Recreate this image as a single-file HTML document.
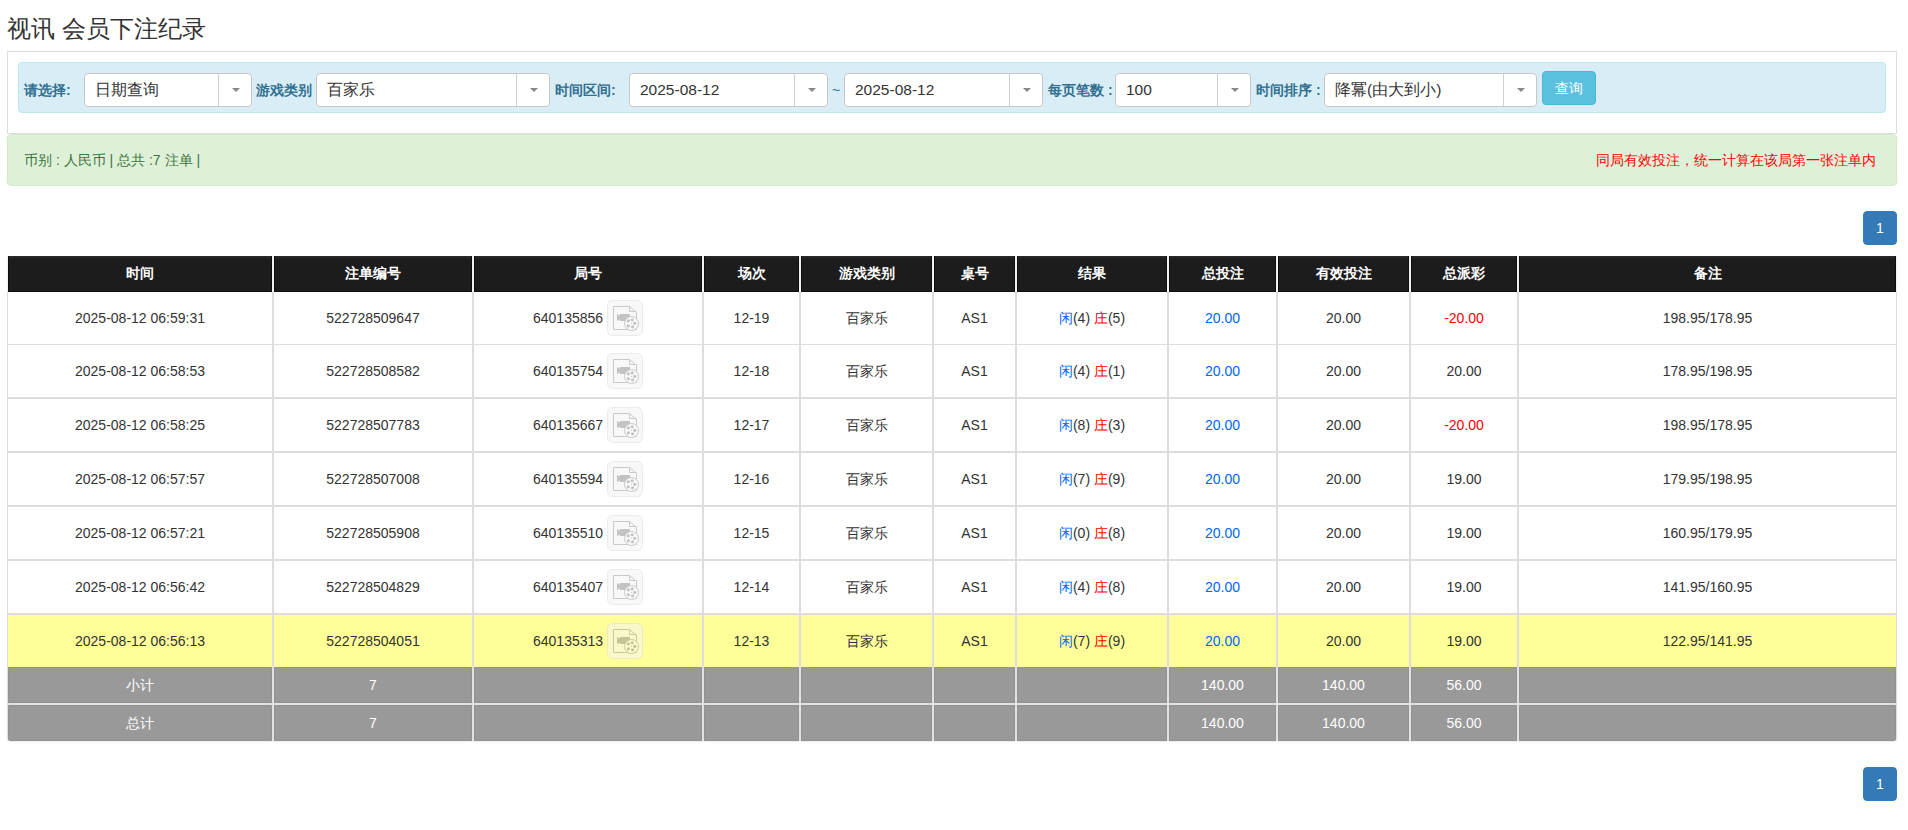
<!DOCTYPE html>
<html><head><meta charset="utf-8"><title>视讯 会员下注纪录</title>
<style>
*{box-sizing:border-box;margin:0;padding:0}
html,body{width:1908px;height:830px;overflow:hidden;background:#fff}
body{position:relative;font-family:"Liberation Sans",sans-serif;font-size:14px;color:#333}
.a{position:absolute}
.title{left:7px;top:13px;font-size:24px;line-height:32px;color:#333;white-space:nowrap}
.panel{left:7px;top:51px;width:1890px;height:83px;border:1px solid #ddd;background:#fff}
.info{left:18px;top:62px;width:1868px;height:51px;border:1px solid #bce8f1;background:#d9edf7;border-radius:4px}
.lbl{top:73px;height:34px;line-height:34px;font-weight:bold;color:#31708f;white-space:nowrap}
.sel{top:73px;height:34px;border:1px solid #c8c8c8;border-radius:4px;background:#fff}
.sel .t{position:absolute;left:10px;top:0;line-height:32px;font-size:15.5px;color:#333;white-space:nowrap}
.sel .d{position:absolute;top:0;bottom:0;right:32px;width:1px;background:#d0d0d0}
.sel .ar{position:absolute;top:14px;right:11px;width:0;height:0;border-left:4px solid transparent;border-right:4px solid transparent;border-top:4px solid #888}
.btn{left:1542px;top:71px;width:54px;height:34px;border:1px solid #46b8da;background:#5bc0de;border-radius:4px;color:#fff;text-align:center;line-height:32px}
.ok{left:7px;top:134px;width:1890px;height:52px;border:1px solid #d6e9c6;background:#dff0d8;border-radius:4px;color:#3c763d;line-height:50px}
.ok .l{position:absolute;left:16px;top:0;white-space:nowrap}
.ok .r{position:absolute;right:20px;top:0;white-space:nowrap;color:#f00}
.pg{left:1863px;width:34px;height:34px;background:#337ab7;border:1px solid #337ab7;border-radius:4px;color:#fff;text-align:center;line-height:32px}
.c{position:absolute;text-align:center;white-space:nowrap}
.h{background:linear-gradient(#2c2c2c 0,#222 2px,#1c1c1c 4px);color:#fff;font-weight:bold;border:1px solid #0e0e0e;border-top:0}
.b{background:#fff}
.y{background:#ffff99}
.g{background:#999;color:#fff;border:1px solid #929292}
.blue{color:#06f}
.red{color:#f00}
.vi{vertical-align:middle;position:relative;top:-1px;opacity:.55}
</style></head><body>

<div class="a title">视讯 会员下注纪录</div>
<div class="a panel"></div>
<div class="a info"></div>
<div class="a lbl" style="left:24px">请选择:</div>
<div class="a lbl" style="left:256px">游戏类别</div>
<div class="a lbl" style="left:555px">时间区间:</div>
<div class="a lbl" style="left:1048px">每页笔数 :</div>
<div class="a lbl" style="left:1256px">时间排序 :</div>
<div class="a lbl" style="left:832px;font-weight:normal">~</div>
<div class="a sel" style="left:84px;width:168px"><span class="t">日期查询</span><span class="d"></span><span class="ar"></span></div>
<div class="a sel" style="left:316px;width:234px"><span class="t">百家乐</span><span class="d"></span><span class="ar"></span></div>
<div class="a sel" style="left:629px;width:199px"><span class="t">2025-08-12</span><span class="d"></span><span class="ar"></span></div>
<div class="a sel" style="left:844px;width:199px"><span class="t">2025-08-12</span><span class="d"></span><span class="ar"></span></div>
<div class="a sel" style="left:1115px;width:136px"><span class="t">100</span><span class="d"></span><span class="ar"></span></div>
<div class="a sel" style="left:1324px;width:213px"><span class="t">降冪(由大到小)</span><span class="d"></span><span class="ar"></span></div>
<div class="a btn">查询</div>
<div class="a ok"><span class="l">币别 : 人民币 | 总共 :7 注单 |</span><span class="r">同局有效投注，统一计算在该局第一张注单内</span></div>
<div class="a pg" style="top:211px">1</div>
<div class="a pg" style="top:767px">1</div>
<div class="a" style="left:7px;top:256px;width:1890px;height:36px;background:#f2f2f2"></div>
<div class="a" style="left:7px;top:292px;width:1890px;height:375px;background:#ddd"></div>
<div class="a" style="left:7px;top:667px;width:1890px;height:74px;background:#e2e2e2;border-radius:0 0 3px 3px;box-shadow:0 1px 2px rgba(0,0,0,.08)"></div>
<div class="c h" style="left:8px;top:256px;width:264px;height:36px;line-height:36px;line-height:34px">时间</div>
<div class="c h" style="left:274px;top:256px;width:198px;height:36px;line-height:36px;line-height:34px">注单编号</div>
<div class="c h" style="left:474px;top:256px;width:228px;height:36px;line-height:36px;line-height:34px">局号</div>
<div class="c h" style="left:704px;top:256px;width:95px;height:36px;line-height:36px;line-height:34px">场次</div>
<div class="c h" style="left:801px;top:256px;width:131px;height:36px;line-height:36px;line-height:34px">游戏类别</div>
<div class="c h" style="left:934px;top:256px;width:81px;height:36px;line-height:36px;line-height:34px">桌号</div>
<div class="c h" style="left:1017px;top:256px;width:150px;height:36px;line-height:36px;line-height:34px">结果</div>
<div class="c h" style="left:1169px;top:256px;width:107px;height:36px;line-height:36px;line-height:34px">总投注</div>
<div class="c h" style="left:1278px;top:256px;width:131px;height:36px;line-height:36px;line-height:34px">有效投注</div>
<div class="c h" style="left:1411px;top:256px;width:106px;height:36px;line-height:36px;line-height:34px">总派彩</div>
<div class="c h" style="left:1519px;top:256px;width:377px;height:36px;line-height:36px;line-height:34px">备注</div>
<div class="c b" style="left:8px;top:292px;width:264px;height:52px;line-height:52px;">2025-08-12 06:59:31</div>
<div class="c b" style="left:274px;top:292px;width:198px;height:52px;line-height:52px;">522728509647</div>
<div class="c b" style="left:474px;top:292px;width:228px;height:52px;line-height:52px;">640135856 <svg class="vi" width="36" height="36" viewBox="0 0 36 36"><rect x="0.5" y="0.5" width="35" height="35" rx="5" ry="5" fill="#f3f3f3" stroke="#dcdcdc"/><path d="M6.5 6.5H22.5L29.5 12.5V29.5H6.5Z" fill="none" stroke="#9d9d9d"/><path d="M22.5 6.5V11.5H29.5" fill="none" stroke="#9d9d9d"/><path d="M13 14H23V21H13V19.5L10 21V14L13 15.5Z" fill="#939393"/><circle cx="24.5" cy="23.5" r="7" fill="#f6f6f6" stroke="#9d9d9d"/><circle cx="21.3" cy="20.8" r="1.6" fill="#939393"/><circle cx="25.2" cy="19.8" r="1.6" fill="#939393"/><circle cx="27.8" cy="23.3" r="1.6" fill="#939393"/><circle cx="25.5" cy="26.8" r="1.6" fill="#939393"/><circle cx="21.3" cy="25.8" r="1.6" fill="#939393"/><circle cx="24.5" cy="23.3" r="0.6" fill="#939393"/></svg></div>
<div class="c b" style="left:704px;top:292px;width:95px;height:52px;line-height:52px;">12-19</div>
<div class="c b" style="left:801px;top:292px;width:131px;height:52px;line-height:52px;">百家乐</div>
<div class="c b" style="left:934px;top:292px;width:81px;height:52px;line-height:52px;">AS1</div>
<div class="c b" style="left:1017px;top:292px;width:150px;height:52px;line-height:52px;"><span class="blue">闲</span>(4) <span class="red">庄</span>(5)</div>
<div class="c b" style="left:1169px;top:292px;width:107px;height:52px;line-height:52px;"><span class="blue">20.00</span></div>
<div class="c b" style="left:1278px;top:292px;width:131px;height:52px;line-height:52px;">20.00</div>
<div class="c b" style="left:1411px;top:292px;width:106px;height:52px;line-height:52px;"><span class="red">-20.00</span></div>
<div class="c b" style="left:1519px;top:292px;width:377px;height:52px;line-height:52px;">198.95/178.95</div>
<div class="c b" style="left:8px;top:345px;width:264px;height:52px;line-height:52px;">2025-08-12 06:58:53</div>
<div class="c b" style="left:274px;top:345px;width:198px;height:52px;line-height:52px;">522728508582</div>
<div class="c b" style="left:474px;top:345px;width:228px;height:52px;line-height:52px;">640135754 <svg class="vi" width="36" height="36" viewBox="0 0 36 36"><rect x="0.5" y="0.5" width="35" height="35" rx="5" ry="5" fill="#f3f3f3" stroke="#dcdcdc"/><path d="M6.5 6.5H22.5L29.5 12.5V29.5H6.5Z" fill="none" stroke="#9d9d9d"/><path d="M22.5 6.5V11.5H29.5" fill="none" stroke="#9d9d9d"/><path d="M13 14H23V21H13V19.5L10 21V14L13 15.5Z" fill="#939393"/><circle cx="24.5" cy="23.5" r="7" fill="#f6f6f6" stroke="#9d9d9d"/><circle cx="21.3" cy="20.8" r="1.6" fill="#939393"/><circle cx="25.2" cy="19.8" r="1.6" fill="#939393"/><circle cx="27.8" cy="23.3" r="1.6" fill="#939393"/><circle cx="25.5" cy="26.8" r="1.6" fill="#939393"/><circle cx="21.3" cy="25.8" r="1.6" fill="#939393"/><circle cx="24.5" cy="23.3" r="0.6" fill="#939393"/></svg></div>
<div class="c b" style="left:704px;top:345px;width:95px;height:52px;line-height:52px;">12-18</div>
<div class="c b" style="left:801px;top:345px;width:131px;height:52px;line-height:52px;">百家乐</div>
<div class="c b" style="left:934px;top:345px;width:81px;height:52px;line-height:52px;">AS1</div>
<div class="c b" style="left:1017px;top:345px;width:150px;height:52px;line-height:52px;"><span class="blue">闲</span>(4) <span class="red">庄</span>(1)</div>
<div class="c b" style="left:1169px;top:345px;width:107px;height:52px;line-height:52px;"><span class="blue">20.00</span></div>
<div class="c b" style="left:1278px;top:345px;width:131px;height:52px;line-height:52px;">20.00</div>
<div class="c b" style="left:1411px;top:345px;width:106px;height:52px;line-height:52px;">20.00</div>
<div class="c b" style="left:1519px;top:345px;width:377px;height:52px;line-height:52px;">178.95/198.95</div>
<div class="c b" style="left:8px;top:399px;width:264px;height:52px;line-height:52px;">2025-08-12 06:58:25</div>
<div class="c b" style="left:274px;top:399px;width:198px;height:52px;line-height:52px;">522728507783</div>
<div class="c b" style="left:474px;top:399px;width:228px;height:52px;line-height:52px;">640135667 <svg class="vi" width="36" height="36" viewBox="0 0 36 36"><rect x="0.5" y="0.5" width="35" height="35" rx="5" ry="5" fill="#f3f3f3" stroke="#dcdcdc"/><path d="M6.5 6.5H22.5L29.5 12.5V29.5H6.5Z" fill="none" stroke="#9d9d9d"/><path d="M22.5 6.5V11.5H29.5" fill="none" stroke="#9d9d9d"/><path d="M13 14H23V21H13V19.5L10 21V14L13 15.5Z" fill="#939393"/><circle cx="24.5" cy="23.5" r="7" fill="#f6f6f6" stroke="#9d9d9d"/><circle cx="21.3" cy="20.8" r="1.6" fill="#939393"/><circle cx="25.2" cy="19.8" r="1.6" fill="#939393"/><circle cx="27.8" cy="23.3" r="1.6" fill="#939393"/><circle cx="25.5" cy="26.8" r="1.6" fill="#939393"/><circle cx="21.3" cy="25.8" r="1.6" fill="#939393"/><circle cx="24.5" cy="23.3" r="0.6" fill="#939393"/></svg></div>
<div class="c b" style="left:704px;top:399px;width:95px;height:52px;line-height:52px;">12-17</div>
<div class="c b" style="left:801px;top:399px;width:131px;height:52px;line-height:52px;">百家乐</div>
<div class="c b" style="left:934px;top:399px;width:81px;height:52px;line-height:52px;">AS1</div>
<div class="c b" style="left:1017px;top:399px;width:150px;height:52px;line-height:52px;"><span class="blue">闲</span>(8) <span class="red">庄</span>(3)</div>
<div class="c b" style="left:1169px;top:399px;width:107px;height:52px;line-height:52px;"><span class="blue">20.00</span></div>
<div class="c b" style="left:1278px;top:399px;width:131px;height:52px;line-height:52px;">20.00</div>
<div class="c b" style="left:1411px;top:399px;width:106px;height:52px;line-height:52px;"><span class="red">-20.00</span></div>
<div class="c b" style="left:1519px;top:399px;width:377px;height:52px;line-height:52px;">198.95/178.95</div>
<div class="c b" style="left:8px;top:453px;width:264px;height:52px;line-height:52px;">2025-08-12 06:57:57</div>
<div class="c b" style="left:274px;top:453px;width:198px;height:52px;line-height:52px;">522728507008</div>
<div class="c b" style="left:474px;top:453px;width:228px;height:52px;line-height:52px;">640135594 <svg class="vi" width="36" height="36" viewBox="0 0 36 36"><rect x="0.5" y="0.5" width="35" height="35" rx="5" ry="5" fill="#f3f3f3" stroke="#dcdcdc"/><path d="M6.5 6.5H22.5L29.5 12.5V29.5H6.5Z" fill="none" stroke="#9d9d9d"/><path d="M22.5 6.5V11.5H29.5" fill="none" stroke="#9d9d9d"/><path d="M13 14H23V21H13V19.5L10 21V14L13 15.5Z" fill="#939393"/><circle cx="24.5" cy="23.5" r="7" fill="#f6f6f6" stroke="#9d9d9d"/><circle cx="21.3" cy="20.8" r="1.6" fill="#939393"/><circle cx="25.2" cy="19.8" r="1.6" fill="#939393"/><circle cx="27.8" cy="23.3" r="1.6" fill="#939393"/><circle cx="25.5" cy="26.8" r="1.6" fill="#939393"/><circle cx="21.3" cy="25.8" r="1.6" fill="#939393"/><circle cx="24.5" cy="23.3" r="0.6" fill="#939393"/></svg></div>
<div class="c b" style="left:704px;top:453px;width:95px;height:52px;line-height:52px;">12-16</div>
<div class="c b" style="left:801px;top:453px;width:131px;height:52px;line-height:52px;">百家乐</div>
<div class="c b" style="left:934px;top:453px;width:81px;height:52px;line-height:52px;">AS1</div>
<div class="c b" style="left:1017px;top:453px;width:150px;height:52px;line-height:52px;"><span class="blue">闲</span>(7) <span class="red">庄</span>(9)</div>
<div class="c b" style="left:1169px;top:453px;width:107px;height:52px;line-height:52px;"><span class="blue">20.00</span></div>
<div class="c b" style="left:1278px;top:453px;width:131px;height:52px;line-height:52px;">20.00</div>
<div class="c b" style="left:1411px;top:453px;width:106px;height:52px;line-height:52px;">19.00</div>
<div class="c b" style="left:1519px;top:453px;width:377px;height:52px;line-height:52px;">179.95/198.95</div>
<div class="c b" style="left:8px;top:507px;width:264px;height:52px;line-height:52px;">2025-08-12 06:57:21</div>
<div class="c b" style="left:274px;top:507px;width:198px;height:52px;line-height:52px;">522728505908</div>
<div class="c b" style="left:474px;top:507px;width:228px;height:52px;line-height:52px;">640135510 <svg class="vi" width="36" height="36" viewBox="0 0 36 36"><rect x="0.5" y="0.5" width="35" height="35" rx="5" ry="5" fill="#f3f3f3" stroke="#dcdcdc"/><path d="M6.5 6.5H22.5L29.5 12.5V29.5H6.5Z" fill="none" stroke="#9d9d9d"/><path d="M22.5 6.5V11.5H29.5" fill="none" stroke="#9d9d9d"/><path d="M13 14H23V21H13V19.5L10 21V14L13 15.5Z" fill="#939393"/><circle cx="24.5" cy="23.5" r="7" fill="#f6f6f6" stroke="#9d9d9d"/><circle cx="21.3" cy="20.8" r="1.6" fill="#939393"/><circle cx="25.2" cy="19.8" r="1.6" fill="#939393"/><circle cx="27.8" cy="23.3" r="1.6" fill="#939393"/><circle cx="25.5" cy="26.8" r="1.6" fill="#939393"/><circle cx="21.3" cy="25.8" r="1.6" fill="#939393"/><circle cx="24.5" cy="23.3" r="0.6" fill="#939393"/></svg></div>
<div class="c b" style="left:704px;top:507px;width:95px;height:52px;line-height:52px;">12-15</div>
<div class="c b" style="left:801px;top:507px;width:131px;height:52px;line-height:52px;">百家乐</div>
<div class="c b" style="left:934px;top:507px;width:81px;height:52px;line-height:52px;">AS1</div>
<div class="c b" style="left:1017px;top:507px;width:150px;height:52px;line-height:52px;"><span class="blue">闲</span>(0) <span class="red">庄</span>(8)</div>
<div class="c b" style="left:1169px;top:507px;width:107px;height:52px;line-height:52px;"><span class="blue">20.00</span></div>
<div class="c b" style="left:1278px;top:507px;width:131px;height:52px;line-height:52px;">20.00</div>
<div class="c b" style="left:1411px;top:507px;width:106px;height:52px;line-height:52px;">19.00</div>
<div class="c b" style="left:1519px;top:507px;width:377px;height:52px;line-height:52px;">160.95/179.95</div>
<div class="c b" style="left:8px;top:561px;width:264px;height:52px;line-height:52px;">2025-08-12 06:56:42</div>
<div class="c b" style="left:274px;top:561px;width:198px;height:52px;line-height:52px;">522728504829</div>
<div class="c b" style="left:474px;top:561px;width:228px;height:52px;line-height:52px;">640135407 <svg class="vi" width="36" height="36" viewBox="0 0 36 36"><rect x="0.5" y="0.5" width="35" height="35" rx="5" ry="5" fill="#f3f3f3" stroke="#dcdcdc"/><path d="M6.5 6.5H22.5L29.5 12.5V29.5H6.5Z" fill="none" stroke="#9d9d9d"/><path d="M22.5 6.5V11.5H29.5" fill="none" stroke="#9d9d9d"/><path d="M13 14H23V21H13V19.5L10 21V14L13 15.5Z" fill="#939393"/><circle cx="24.5" cy="23.5" r="7" fill="#f6f6f6" stroke="#9d9d9d"/><circle cx="21.3" cy="20.8" r="1.6" fill="#939393"/><circle cx="25.2" cy="19.8" r="1.6" fill="#939393"/><circle cx="27.8" cy="23.3" r="1.6" fill="#939393"/><circle cx="25.5" cy="26.8" r="1.6" fill="#939393"/><circle cx="21.3" cy="25.8" r="1.6" fill="#939393"/><circle cx="24.5" cy="23.3" r="0.6" fill="#939393"/></svg></div>
<div class="c b" style="left:704px;top:561px;width:95px;height:52px;line-height:52px;">12-14</div>
<div class="c b" style="left:801px;top:561px;width:131px;height:52px;line-height:52px;">百家乐</div>
<div class="c b" style="left:934px;top:561px;width:81px;height:52px;line-height:52px;">AS1</div>
<div class="c b" style="left:1017px;top:561px;width:150px;height:52px;line-height:52px;"><span class="blue">闲</span>(4) <span class="red">庄</span>(8)</div>
<div class="c b" style="left:1169px;top:561px;width:107px;height:52px;line-height:52px;"><span class="blue">20.00</span></div>
<div class="c b" style="left:1278px;top:561px;width:131px;height:52px;line-height:52px;">20.00</div>
<div class="c b" style="left:1411px;top:561px;width:106px;height:52px;line-height:52px;">19.00</div>
<div class="c b" style="left:1519px;top:561px;width:377px;height:52px;line-height:52px;">141.95/160.95</div>
<div class="c y" style="left:8px;top:615px;width:264px;height:52px;line-height:52px;">2025-08-12 06:56:13</div>
<div class="c y" style="left:274px;top:615px;width:198px;height:52px;line-height:52px;">522728504051</div>
<div class="c y" style="left:474px;top:615px;width:228px;height:52px;line-height:52px;">640135313 <svg class="vi" width="36" height="36" viewBox="0 0 36 36"><rect x="0.5" y="0.5" width="35" height="35" rx="5" ry="5" fill="#f3f3f3" stroke="#dcdcdc"/><path d="M6.5 6.5H22.5L29.5 12.5V29.5H6.5Z" fill="none" stroke="#9d9d9d"/><path d="M22.5 6.5V11.5H29.5" fill="none" stroke="#9d9d9d"/><path d="M13 14H23V21H13V19.5L10 21V14L13 15.5Z" fill="#939393"/><circle cx="24.5" cy="23.5" r="7" fill="#f6f6f6" stroke="#9d9d9d"/><circle cx="21.3" cy="20.8" r="1.6" fill="#939393"/><circle cx="25.2" cy="19.8" r="1.6" fill="#939393"/><circle cx="27.8" cy="23.3" r="1.6" fill="#939393"/><circle cx="25.5" cy="26.8" r="1.6" fill="#939393"/><circle cx="21.3" cy="25.8" r="1.6" fill="#939393"/><circle cx="24.5" cy="23.3" r="0.6" fill="#939393"/></svg></div>
<div class="c y" style="left:704px;top:615px;width:95px;height:52px;line-height:52px;">12-13</div>
<div class="c y" style="left:801px;top:615px;width:131px;height:52px;line-height:52px;">百家乐</div>
<div class="c y" style="left:934px;top:615px;width:81px;height:52px;line-height:52px;">AS1</div>
<div class="c y" style="left:1017px;top:615px;width:150px;height:52px;line-height:52px;"><span class="blue">闲</span>(7) <span class="red">庄</span>(9)</div>
<div class="c y" style="left:1169px;top:615px;width:107px;height:52px;line-height:52px;"><span class="blue">20.00</span></div>
<div class="c y" style="left:1278px;top:615px;width:131px;height:52px;line-height:52px;">20.00</div>
<div class="c y" style="left:1411px;top:615px;width:106px;height:52px;line-height:52px;">19.00</div>
<div class="c y" style="left:1519px;top:615px;width:377px;height:52px;line-height:52px;">122.95/141.95</div>
<div class="c g" style="left:8px;top:667px;width:264px;height:36px;line-height:36px;line-height:34px;">小计</div>
<div class="c g" style="left:274px;top:667px;width:198px;height:36px;line-height:36px;line-height:34px;">7</div>
<div class="c g" style="left:474px;top:667px;width:228px;height:36px;line-height:36px;line-height:34px;"></div>
<div class="c g" style="left:704px;top:667px;width:95px;height:36px;line-height:36px;line-height:34px;"></div>
<div class="c g" style="left:801px;top:667px;width:131px;height:36px;line-height:36px;line-height:34px;"></div>
<div class="c g" style="left:934px;top:667px;width:81px;height:36px;line-height:36px;line-height:34px;"></div>
<div class="c g" style="left:1017px;top:667px;width:150px;height:36px;line-height:36px;line-height:34px;"></div>
<div class="c g" style="left:1169px;top:667px;width:107px;height:36px;line-height:36px;line-height:34px;">140.00</div>
<div class="c g" style="left:1278px;top:667px;width:131px;height:36px;line-height:36px;line-height:34px;">140.00</div>
<div class="c g" style="left:1411px;top:667px;width:106px;height:36px;line-height:36px;line-height:34px;">56.00</div>
<div class="c g" style="left:1519px;top:667px;width:377px;height:36px;line-height:36px;line-height:34px;"></div>
<div class="c g" style="left:8px;top:705px;width:264px;height:36px;line-height:36px;line-height:34px;border-bottom-left-radius:2px;">总计</div>
<div class="c g" style="left:274px;top:705px;width:198px;height:36px;line-height:36px;line-height:34px;">7</div>
<div class="c g" style="left:474px;top:705px;width:228px;height:36px;line-height:36px;line-height:34px;"></div>
<div class="c g" style="left:704px;top:705px;width:95px;height:36px;line-height:36px;line-height:34px;"></div>
<div class="c g" style="left:801px;top:705px;width:131px;height:36px;line-height:36px;line-height:34px;"></div>
<div class="c g" style="left:934px;top:705px;width:81px;height:36px;line-height:36px;line-height:34px;"></div>
<div class="c g" style="left:1017px;top:705px;width:150px;height:36px;line-height:36px;line-height:34px;"></div>
<div class="c g" style="left:1169px;top:705px;width:107px;height:36px;line-height:36px;line-height:34px;">140.00</div>
<div class="c g" style="left:1278px;top:705px;width:131px;height:36px;line-height:36px;line-height:34px;">140.00</div>
<div class="c g" style="left:1411px;top:705px;width:106px;height:36px;line-height:36px;line-height:34px;">56.00</div>
<div class="c g" style="left:1519px;top:705px;width:377px;height:36px;line-height:36px;line-height:34px;border-bottom-right-radius:2px;"></div>
</body></html>
